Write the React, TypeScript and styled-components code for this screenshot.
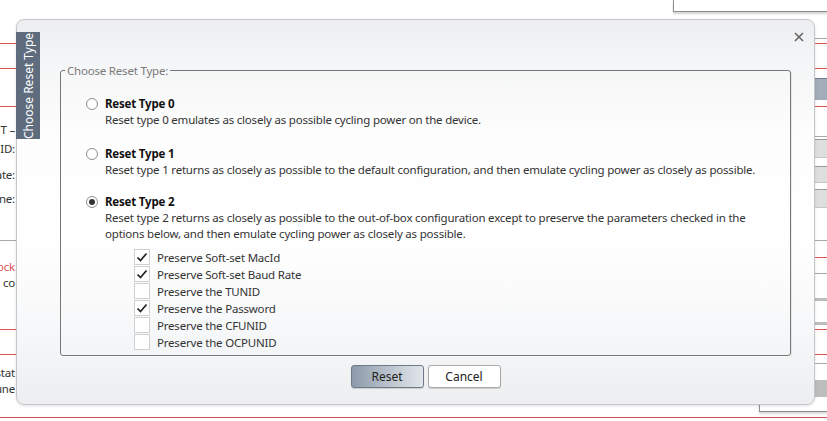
import React from "react";
import styled, { createGlobalStyle } from "styled-components";

const Global = createGlobalStyle`
  html, body { margin: 0; padding: 0; background: #fff; }
  body { font-family: "Noto Sans", "Open Sans", sans-serif; font-size: 11.5px; letter-spacing: -0.2px; color: #222; overflow: hidden; }
  * { box-sizing: border-box; }
`;

const Page = styled.div`
  position: relative;
  width: 827px;
  height: 421px;
  overflow: hidden;
  background: #fff;
`;

/* ---------- backdrop ---------- */
const Backdrop = styled.div`
  display: flex;
  flex-direction: column;
`;

type RowProps = { $h: number; $line?: string; $full?: boolean };
const Row = styled.div<RowProps>`
  height: ${(p) => p.$h}px;
  display: grid;
  grid-template-columns: 15px 1fr 68px;
  align-items: center;
  border-bottom: ${(p) => (p.$full && p.$line ? `1px solid ${p.$line}` : "none")};
`;

const Label = styled.div<{ $red?: boolean }>`
  display: flex;
  justify-content: flex-end;
  white-space: nowrap;
  color: ${(p) => (p.$red ? "#d9534f" : "#333")};
`;

type RightKind = "none" | "line" | "slate" | "gray" | "thick" | "box" | "redline";
const RightCell = styled.div<{ $kind: RightKind }>`
  grid-column: 3;
  align-self: stretch;
  ${(p) =>
    p.$kind === "line"
      ? "border-bottom: 1px solid #a8a8a8;"
      : p.$kind === "redline"
      ? "border-bottom: 1px solid #d9534f;"
      : p.$kind === "slate"
      ? "background: #a3adb9; border-top: 1px solid #6f7d8f;"
      : p.$kind === "gray"
      ? "background: #dedede; border-top: 1px solid #9a9a9a; border-bottom: 1px solid #c8c8c8;"
      : p.$kind === "thick"
      ? "background: #bdbdbd;"
      : p.$kind === "box"
      ? "border-left: 1px solid #8d8d8d; border-bottom: 1px solid #8d8d8d; box-shadow: 0 2px 2px rgba(0,0,0,0.15);"
      : ""}
`;

const TopRow = styled.div`
  height: 13px;
  display: flex;
  justify-content: flex-end;
`;

const TopBox = styled.div`
  width: 154px;
  height: 12px;
  border-left: 1px solid #8d8d8d;
  border-bottom: 1px solid #8d8d8d;
  box-shadow: 0 2px 2px rgba(0, 0, 0, 0.18);
`;

const rows: { h: number; line?: string; full?: boolean; label?: string; red?: boolean; right?: RightKind }[] = [
  { h: 26, right: "line" },
  { h: 5, line: "#d9534f", full: true },
  { h: 25, line: "#d9534f", full: true },
  { h: 9 },
  { h: 22, right: "slate" },
  { h: 7, line: "#d9534f", full: true },
  { h: 14 },
  { h: 16, label: "T –", right: "line" },
  { h: 2 },
  { h: 19, label: "ID:", right: "gray" },
  { h: 8 },
  { h: 17, label: "ate:", right: "gray" },
  { h: 6 },
  { h: 19, label: "ne:", right: "gray" },
  { h: 33, line: "#a8a8a8", full: true },
  { h: 17, right: "redline" },
  { h: 16, label: "ock", red: true, right: "line" },
  { h: 17, label: "co" },
  { h: 7 },
  { h: 3, right: "thick" },
  { h: 21 },
  { h: 3, right: "thick" },
  { h: 5, line: "#d9534f", full: true },
  { h: 25, line: "#d9534f", full: true },
  { h: 9, right: "line" },
  { h: 16, label: "stat" },
  { h: 17, label: "une", right: "thick" },
  { h: 15, right: "box" },
  { h: 6, line: "#d9534f", full: true },
];

/* ---------- dialog ---------- */
const Dialog = styled.div`
  position: absolute;
  left: 16px;
  top: 19px;
  width: 799px;
  height: 386px;
  border: 1px solid #c4c6c9;
  border-radius: 8px;
  background: linear-gradient(
    to bottom,
    #edeef0 0%,
    #f5f6f7 12%,
    #fdfdfd 30%,
    #ffffff 55%,
    #f7f8f9 80%,
    #eceef0 100%
  );
  box-shadow: 0 1px 3px rgba(0, 0, 0, 0.12);
  padding: 43px 23px 16px 43px;
  display: flex;
  flex-direction: column;
`;

const SideTab = styled.div`
  position: absolute;
  left: -1px;
  top: 12px;
  width: 24px;
  height: 107px;
  background: #5e6c7d;
  color: #fff;
  font-size: 12px;
  letter-spacing: 0;
  writing-mode: vertical-rl;
  transform: rotate(180deg);
  display: flex;
  align-items: center;
  justify-content: center;
  white-space: nowrap;
`;

const CloseBtn = styled.button`
  position: absolute;
  right: 9px;
  top: 11px;
  width: 12px;
  height: 12px;
  padding: 0;
  border: 0;
  background: transparent;
  display: flex;
  align-items: center;
  justify-content: center;
`;

const Group = styled.fieldset`
  margin: 0;
  flex: 1;
  border: 1px solid #767676;
  border-radius: 3px;
  box-shadow: 0 1px 0 rgba(255, 255, 255, 0.9), 1px 1px 1px rgba(0, 0, 0, 0.08);
  padding: 18px 20px 3px 25px;
  min-width: 0;
`;

const Legend = styled.legend`
  color: #7a7a7a;
  padding: 0 2px;
  margin-left: -21px;
`;

const Options = styled.div`
  display: flex;
  flex-direction: column;
`;

const Option = styled.div<{ $space: number }>`
  display: grid;
  grid-template-columns: 12px 1fr;
  column-gap: 7px;
  align-items: start;
  margin-top: ${(p) => p.$space}px;
`;

const Radio = styled.span<{ $on?: boolean }>`
  width: 12px;
  height: 12px;
  margin-top: 2px;
  border-radius: 50%;
  border: 1px solid #8c8c8c;
  background: #fff;
  display: flex;
  align-items: center;
  justify-content: center;
  &::after {
    content: "";
    width: 6px;
    height: 6px;
    border-radius: 50%;
    background: ${(p) => (p.$on ? "#333" : "transparent")};
  }
`;

const OptionBody = styled.div`
  display: flex;
  flex-direction: column;
`;

const Title = styled.div`
  font-weight: 700;
  color: #111;
  line-height: 16px;
`;

const Desc = styled.div`
  color: #333;
  line-height: 16px;
`;

const Checks = styled.div`
  display: flex;
  flex-direction: column;
  gap: 1px;
  margin: 7px 0 0 29px;
`;

const CheckRow = styled.label`
  display: flex;
  align-items: center;
  gap: 7px;
  height: 16px;
  color: #333;
`;

const Box = styled.span`
  width: 16px;
  height: 16px;
  border: 1px solid #d0d0d0;
  background: #fff;
  display: flex;
  align-items: center;
  justify-content: center;
`;

const Buttons = styled.div`
  display: flex;
  justify-content: center;
  gap: 4px;
  margin-top: 9px;
`;

const Button = styled.button<{ $primary?: boolean }>`
  width: 73px;
  height: 23px;
  font-family: inherit;
  font-size: 12px;
  letter-spacing: 0;
  color: #222;
  border-radius: 3px;
  border: 1px solid ${(p) => (p.$primary ? "#6e7a89" : "#a9a9a9")};
  background: ${(p) =>
    p.$primary ? "linear-gradient(to right, #8d9aaa 0%, #b9c2cc 50%, #e2e6ea 100%)" : "#fff"};
  box-shadow: 0 1px 1px rgba(0, 0, 0, 0.15);
  padding: 0;
`;

const CheckMark = () => (
  <svg width="12" height="12" viewBox="0 0 12 12">
    <polyline points="1.5,6.5 4.5,9.5 10.5,2.5" fill="none" stroke="#222" strokeWidth="1.7" />
  </svg>
);

const checks = [
  { label: "Preserve Soft-set MacId", on: true },
  { label: "Preserve Soft-set Baud Rate", on: true },
  { label: "Preserve the TUNID", on: false },
  { label: "Preserve the Password", on: true },
  { label: "Preserve the CFUNID", on: false },
  { label: "Preserve the OCPUNID", on: false },
];

const options = [
  {
    title: "Reset Type 0",
    desc: "Reset type 0 emulates as closely as possible cycling power on the device.",
    space: 0,
  },
  {
    title: "Reset Type 1",
    desc: "Reset type 1 returns as closely as possible to the default configuration, and then emulate cycling power as closely as possible.",
    space: 18,
  },
  {
    title: "Reset Type 2",
    desc: "Reset type 2 returns as closely as possible to the out-of-box configuration except to preserve the parameters checked in the options below, and then emulate cycling power as closely as possible.",
    selected: true,
    space: 16,
  },
];

export default function App() {
  return (
    <>
      <Global />
      <Page>
        <Backdrop>
          <TopRow>
            <TopBox />
          </TopRow>
          {rows.map((r, i) => (
            <Row key={i} $h={r.h} $line={r.line} $full={r.full}>
              <Label $red={r.red}>{r.label ?? ""}</Label>
              <div />
              <RightCell $kind={r.right ?? "none"} />
            </Row>
          ))}
        </Backdrop>

        <Dialog>
          <SideTab>Choose Reset Type</SideTab>
          <CloseBtn aria-label="Close">
            <svg width="10" height="10" viewBox="0 0 10 10">
              <path d="M1 1 L9 9 M9 1 L1 9" stroke="#666" strokeWidth="1.6" />
            </svg>
          </CloseBtn>
          <Group>
            <Legend>Choose Reset Type:</Legend>
            <Options>
              {options.map((o) => (
                <Option key={o.title} $space={o.space}>
                  <Radio $on={o.selected} />
                  <OptionBody>
                    <Title>{o.title}</Title>
                    <Desc>{o.desc}</Desc>
                    {o.selected && (
                      <Checks>
                        {checks.map((c) => (
                          <CheckRow key={c.label}>
                            <Box>{c.on && <CheckMark />}</Box>
                            {c.label}
                          </CheckRow>
                        ))}
                      </Checks>
                    )}
                  </OptionBody>
                </Option>
              ))}
            </Options>
          </Group>
          <Buttons>
            <Button $primary>Reset</Button>
            <Button>Cancel</Button>
          </Buttons>
        </Dialog>
      </Page>
    </>
  );
}
